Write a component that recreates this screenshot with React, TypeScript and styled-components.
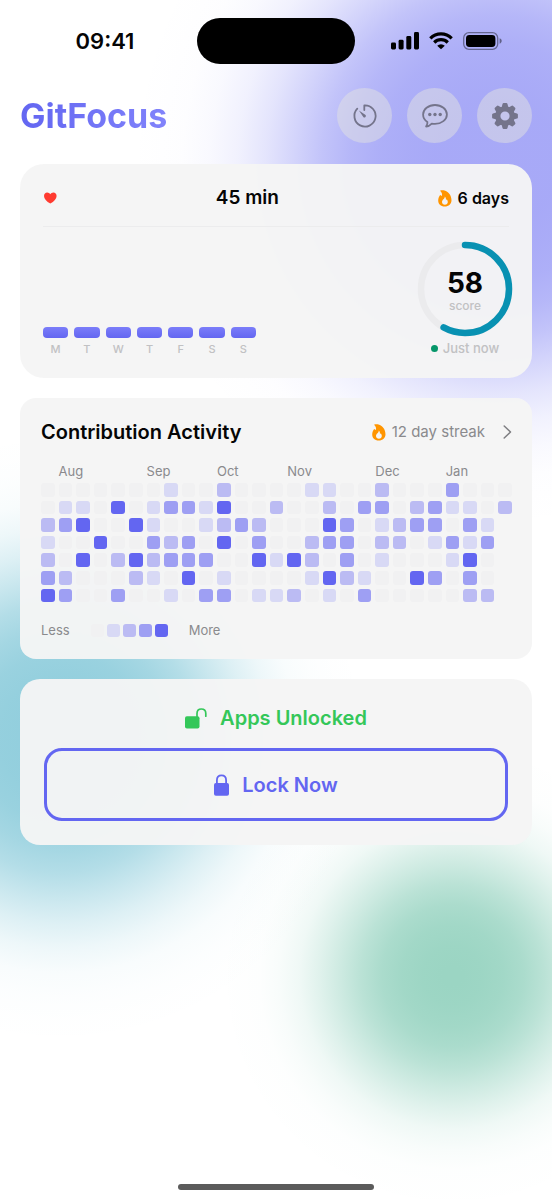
import React from "react";
import styled, { createGlobalStyle } from "styled-components";

const indigo = "#6366f1";
const levels = ["#f1f1f2", "#d8d9f5", "#bbbbf3", "#9e9ff3", indigo];

/* A soft-edged disc: full colour inside `radius`, fading over `soft`. */
const glow = (rgb: string, alpha: number, at: string, radius: number, soft: number) => {
  const curve: [number, number][] = [
    [-2.5, 1], [-2, 0.977], [-1.5, 0.933], [-1, 0.841], [-0.5, 0.691], [0, 0.5],
    [0.5, 0.309], [1, 0.159], [1.5, 0.067], [2, 0.023], [2.5, 0.006], [3, 0],
  ];
  const stops = curve
    .map(([d, a]) => `rgba(${rgb}, ${(a * alpha).toFixed(3)}) ${Math.max(0, Math.round(radius + d * soft))}px`)
    .join(", ");
  return `radial-gradient(circle at ${at}, ${stops})`;
};

const GlobalStyle = createGlobalStyle`
  *, *::before, *::after { box-sizing: border-box; }
  body {
    margin: 0;
    background: #fff;
    color: #050505;
    font-family: Inter, "Liberation Sans", sans-serif;
    -webkit-font-smoothing: antialiased;
  }
  button { font: inherit; color: inherit; cursor: pointer; }
  h1, h2, p { margin: 0; }
`;

const Screen = styled.div`
  display: flex;
  flex-direction: column;
  min-height: 100vh;
  padding: 18px 20px 10px;
  background:
    ${glow("99, 102, 241", 0.56, "90% 162px", 203, 56)},
    ${glow("8, 145, 178", 0.44, "11% 738px", 160, 50)},
    ${glow("5, 150, 105", 0.4, "82% 976px", 112, 41)},
    #fff;
`;

const StatusBar = styled.header`
  display: grid;
  grid-template-columns: 1fr 158px 1fr;
  align-items: center;
  height: 46px;
  margin: 0 -20px;
`;

const Clock = styled.time`
  padding-left: 13px;
  text-align: center;
  font-size: 22px;
  font-weight: 600;
`;

const Island = styled.div`
  height: 46px;
  border-radius: 23px;
  background: #000;
`;

const StatusIcons = styled.div`
  display: flex;
  justify-content: center;
  align-items: center;
  gap: 10px;
  padding-right: 15px;
`;

const TopBar = styled.div`
  display: flex;
  align-items: center;
  justify-content: space-between;
  margin: 24px 0 21px;
`;

const Brand = styled.h1`
  font-size: 34px;
  line-height: 44px;
  font-weight: 700;
  color: transparent;
  background: linear-gradient(90deg, #6366f1, #8183fb);
  background-clip: text;
  -webkit-background-clip: text;
`;

const Actions = styled.nav`
  display: flex;
  gap: 15px;
`;

const RoundButton = styled.button`
  display: grid;
  place-items: center;
  width: 55px;
  height: 55px;
  padding: 0;
  border: 0;
  border-radius: 50%;
  background: rgba(225, 225, 226, 0.5);
  color: #74748b;
`;

const Cards = styled.main`
  display: flex;
  flex-direction: column;
  gap: 20px;
`;

const Card = styled.section<{ $radius: number; $pad: string }>`
  padding: ${(p) => p.$pad};
  border-radius: ${(p) => p.$radius}px;
  background: rgba(245, 245, 245, 0.96);
`;

const SummaryRow = styled.div`
  display: flex;
  justify-content: space-between;
  align-items: center;
  height: 41px;
  padding-bottom: 16px;
  border-bottom: 1px solid #ececed;
`;

const Minutes = styled.p`
  font-size: 19px;
  line-height: 24px;
  font-weight: 600;
`;

const Days = styled.p`
  display: flex;
  align-items: center;
  gap: 6px;
  font-size: 16px;
  line-height: 24px;
  font-weight: 600;
`;

const SummaryBody = styled.div`
  display: flex;
  justify-content: space-between;
  align-items: flex-end;
  padding-top: 18px;
`;

const Week = styled.ol`
  display: grid;
  grid-template-columns: repeat(7, 1fr);
  gap: 6px;
  width: 213px;
  margin: 0;
  padding: 0;
  list-style: none;
`;

const Day = styled.li`
  display: flex;
  flex-direction: column;
  gap: 4px;
  text-align: center;
  font-size: 11px;
  line-height: 14px;
  font-weight: 500;
  color: #c1c1c3;
`;

const Bar = styled.span`
  height: 11px;
  border-radius: 4px;
  background: linear-gradient(#7b7df9, #6366f1);
`;

const ScoreColumn = styled.div`
  display: flex;
  flex-direction: column;
  align-items: center;
  gap: 7px;
`;

const Ring = styled.div`
  display: grid;
  width: 88px;
  height: 88px;
  > * { grid-area: 1 / 1; }
  svg { overflow: visible; }
`;

const Score = styled.div`
  display: flex;
  flex-direction: column;
  align-items: center;
  justify-content: center;
  padding-top: 3px;
  strong { font-size: 28px; line-height: 30px; font-weight: 700; }
  span { font-size: 12px; line-height: 16px; font-weight: 500; color: #c1c1c3; }
`;

const Updated = styled.p`
  display: flex;
  align-items: center;
  gap: 5px;
  font-size: 13px;
  line-height: 16px;
  font-weight: 500;
  color: #c1c1c3;
  &::before {
    content: "";
    width: 7px;
    height: 7px;
    border-radius: 50%;
    background: #059669;
  }
`;

const ActivityHead = styled.div`
  display: flex;
  justify-content: space-between;
  align-items: center;
`;

const ActivityTitle = styled.h2`
  font-size: 20px;
  line-height: 28px;
  font-weight: 600;
`;

const Streak = styled.button`
  display: flex;
  align-items: center;
  gap: 6px;
  padding: 0;
  border: 0;
  background: none;
  font-size: 15px;
  line-height: 20px;
  color: #8a8a8d;
  svg:last-child { margin-left: 12px; }
`;

const Heatmap = styled.div`
  display: grid;
  grid-template-columns: repeat(27, 1fr);
  gap: 4px;
  margin-top: 18px;
`;

const Month = styled.span<{ $col: number }>`
  grid-row: 1;
  grid-column: ${(p) => p.$col} / span 3;
  font-size: 13px;
  line-height: 15px;
  color: #8a8a8d;
`;

const Cell = styled.i<{ $level: number; $row: number; $col: number }>`
  grid-row: ${(p) => p.$row};
  grid-column: ${(p) => p.$col};
  aspect-ratio: 1;
  border-radius: 3px;
  background: ${(p) => levels[p.$level]};
`;

const Legend = styled.div`
  display: flex;
  align-items: center;
  gap: 21px;
  margin-top: 20px;
  font-size: 13px;
  line-height: 17px;
  color: #8a8a8d;
`;

const Swatches = styled.div`
  display: flex;
  gap: 3px;
`;

const Swatch = styled.i<{ $level: number }>`
  width: 13px;
  height: 13px;
  border-radius: 3px;
  background: ${(p) => levels[p.$level]};
`;

const LockState = styled.p`
  display: flex;
  justify-content: center;
  align-items: center;
  gap: 13px;
  font-size: 20px;
  line-height: 28px;
  font-weight: 600;
  color: #34c759;
`;

const LockButton = styled.button`
  display: flex;
  justify-content: center;
  align-items: center;
  gap: 13px;
  width: 100%;
  height: 73px;
  margin-top: 16px;
  padding: 0;
  border: 3px solid ${indigo};
  border-radius: 18px;
  background: none;
  font-size: 20px;
  line-height: 28px;
  font-weight: 600;
  color: ${indigo};
`;

const HomeBar = styled.div`
  width: 196px;
  height: 6px;
  margin: auto auto 0;
  border-radius: 3px;
  background: #5b5b5b;
`;

const Signal = () => (
  <svg width="28" height="18" viewBox="0 0 28 18" aria-hidden="true">
    <rect x="0" y="10.5" width="5" height="7" rx="1.4" />
    <rect x="7.6" y="7.8" width="5" height="9.7" rx="1.4" />
    <rect x="15.3" y="4" width="5" height="13.5" rx="1.4" />
    <rect x="23" y="0" width="5" height="17.5" rx="1.4" />
  </svg>
);

const Wifi = () => (
  <svg width="24" height="18" viewBox="0 0 24 18" aria-hidden="true">
    <g fill="none" stroke="#000" strokeWidth="3.2">
      <path d="M1.3 6.3a15.3 15.3 0 0 1 21.4 0" />
      <path d="M5.2 10.5a9.7 9.7 0 0 1 13.6 0" />
    </g>
    <path d="M12 17.3 8.2 13.7a5.4 5.4 0 0 1 7.6 0Z" />
  </svg>
);

const Battery = () => (
  <svg width="39" height="18" viewBox="0 0 39 18" aria-hidden="true">
    <rect x="0.7" y="0.7" width="34" height="16.6" rx="5.2" fill="none" stroke="#000" strokeOpacity="0.42" strokeWidth="1.3" />
    <rect x="3" y="3" width="29.4" height="12" rx="3.4" />
    <path d="M36.6 6.3c1.3.5 2.1 1.5 2.1 2.7s-.8 2.2-2.1 2.7Z" opacity="0.45" />
  </svg>
);

const TimerIcon = () => (
  <svg width="26" height="26" viewBox="0 0 26 26" fill="none" stroke="currentColor" strokeWidth="1.8" strokeLinecap="round" strokeLinejoin="round" aria-hidden="true">
    <path d="M12.3 7V2.400A10.600 10.600 0 1 1 5.300 5.700" />
    <path d="M6.900 7.500 13.600 12a1.600 1.600 0 0 1-2.100 2.300Z" fill="currentColor" stroke="none" />
  </svg>
);

const BubbleIcon = () => (
  <svg width="28" height="26" viewBox="0 0 28 26" fill="none" stroke="currentColor" strokeWidth="1.8" strokeLinecap="round" strokeLinejoin="round" aria-hidden="true">
    <path d="M14 2C7.400 2 2.100 6.200 2.100 11.500c0 3.200 1.500 5.700 4.300 7.500.3 1.700-.5 3.400-1.300 4.600 2.100-.2 4.200-1.500 5.700-3 1 .2 2.100.3 3.200.3 6.600 0 11.900-4.200 11.900-9.400S20.600 2 14 2Z" />
    <g fill="currentColor" stroke="none">
      <circle cx="8.8" cy="11.5" r="1.7" />
      <circle cx="14" cy="11.5" r="1.7" />
      <circle cx="19.2" cy="11.5" r="1.7" />
    </g>
  </svg>
);

const GearIcon = () => (
  <svg width="26" height="26" viewBox="-13 -13 26 26" fill="currentColor" aria-hidden="true">
    {[0, 45, 90, 135, 180, 225, 270, 315].map((a) => (
      <path
        key={a}
        transform={`rotate(${a})`}
        d="M-3.400-8.500-2.500-12Q-2.200-12.900-1.400-12.900H1.400Q2.200-12.900 2.500-12L3.400-8.500Z"
      />
    ))}
    <circle r="7.2" fill="none" stroke="currentColor" strokeWidth="5.2" />
  </svg>
);

const Heart = () => (
  <svg width="14" height="12" viewBox="0 0 14 12" fill="#ff3b30" aria-hidden="true">
    <path d="M7.300 11.600C3.500 9.200 1 6.700 1 3.900 1 1.900 2.400.4 4.200.4c1.300 0 2.400.7 3.100 1.800C8 1.100 9.100.4 10.400.4c1.800 0 3.200 1.500 3.200 3.500 0 2.800-2.500 5.300-6.300 7.700Z" />
  </svg>
);

const Flame = () => (
  <svg width="14" height="17" viewBox="0 0 14 17" fill="#ff9500" aria-hidden="true">
    <path
      fillRule="evenodd"
      d="M2 .7C3.200.2 4.500.1 5.600.3 10.200 1 13.500 5.300 13.500 10.300c0 3.700-2.700 6.300-6.800 6.300C2.700 16.600.2 14.200.2 10.600c0-2.300.8-4.200 1.900-5.700.7.3 1.200.7 1.700 1.200.8-1.400.1-3.700-1.800-5.400ZM6.800 6.500c.2 2.400-2.800 3.100-2.800 5.500 0 1.600 1.200 2.700 2.900 2.700s2.900-1.100 2.900-2.700c0-1.100-.5-2-1.200-2.700-.1.500-.3.800-.7 1 .3-1.500-.1-2.900-1.100-3.800Z"
    />
  </svg>
);

const Chevron = () => (
  <svg width="9" height="14" viewBox="0 0 9 14" fill="none" stroke="#7e7e82" strokeWidth="1.5" strokeLinecap="round" strokeLinejoin="round" aria-hidden="true">
    <path d="m1.200 1 6.300 6-6.300 6" />
  </svg>
);

const OpenLock = () => (
  <svg width="22" height="21" viewBox="0 0 22 21" aria-hidden="true">
    <rect x="0" y="8.3" width="14.5" height="12.2" rx="1.9" fill="#34c759" />
    <path d="M12 9V5.500C12 2.800 13.700 1 16.300 1s4.500 1.800 4.500 4.500v2.700" fill="none" stroke="#34c759" strokeWidth="1.7" strokeLinecap="round" />
  </svg>
);

const ClosedLock = () => (
  <svg width="15" height="22" viewBox="0 0 15 22" aria-hidden="true">
    <rect x="0" y="9" width="15" height="12.7" rx="1.9" fill={indigo} />
    <path d="M2.900 10V6.200C2.900 3.200 4.800 1.300 7.500 1.300s4.600 1.900 4.600 4.900V10" fill="none" stroke={indigo} strokeWidth="1.8" />
  </svg>
);

const week = ["M", "T", "W", "T", "F", "S", "S"];

const months = [
  { name: "Aug", col: 2 },
  { name: "Sep", col: 7 },
  { name: "Oct", col: 11 },
  { name: "Nov", col: 15 },
  { name: "Dec", col: 20 },
  { name: "Jan", col: 24 },
];

/* One string per weekday, one digit (0-4) per week. */
const contributions = [
  "000000010020000110020003000",
  "011040133140020020330231102",
  "23400410012320004301233031",
  "10040032304030023302201313",
  "20402423330041420301000140",
  "32000210401000014210043030",
  "43003001033011201030000022",
];

const ringLength = 2 * Math.PI * 44;

export default function App() {
  return (
    <Screen>
      <GlobalStyle />
      <StatusBar>
        <Clock>09:41</Clock>
        <Island />
        <StatusIcons>
          <Signal />
          <Wifi />
          <Battery />
        </StatusIcons>
      </StatusBar>

      <TopBar>
        <Brand>GitFocus</Brand>
        <Actions>
          <RoundButton aria-label="Timer"><TimerIcon /></RoundButton>
          <RoundButton aria-label="Messages"><BubbleIcon /></RoundButton>
          <RoundButton aria-label="Settings"><GearIcon /></RoundButton>
        </Actions>
      </TopBar>

      <Cards>
        <Card $radius={24} $pad="22px 23px">
          <SummaryRow>
            <Heart />
            <Minutes>45 min</Minutes>
            <Days><Flame />6 days</Days>
          </SummaryRow>
          <SummaryBody>
            <Week>
              {week.map((d, i) => (
                <Day key={i}><Bar />{d}</Day>
              ))}
            </Week>
            <ScoreColumn>
              <Ring>
                <svg width="88" height="88" viewBox="0 0 88 88" fill="none" strokeWidth="6.5" aria-hidden="true">
                  <circle cx="44" cy="44" r="44" stroke="#ebebed" />
                  <circle
                    cx="44"
                    cy="44"
                    r="44"
                    stroke="#0891b2"
                    strokeLinecap="round"
                    strokeDasharray={`${ringLength * 0.58} ${ringLength}`}
                    transform="rotate(-90 44 44)"
                  />
                </svg>
                <Score><strong>58</strong><span>score</span></Score>
              </Ring>
              <Updated>Just now</Updated>
            </ScoreColumn>
          </SummaryBody>
        </Card>

        <Card $radius={16} $pad="20px 20px 20px 21px">
          <ActivityHead>
            <ActivityTitle>Contribution Activity</ActivityTitle>
            <Streak><Flame />12 day streak<Chevron /></Streak>
          </ActivityHead>
          <Heatmap>
            {months.map((m) => (
              <Month key={m.name} $col={m.col}>{m.name}</Month>
            ))}
            {contributions.map((row, r) =>
              row.split("").map((level, c) => (
                <Cell key={`${r}-${c}`} $level={Number(level)} $row={r + 2} $col={c + 1} />
              ))
            )}
          </Heatmap>
          <Legend>
            <span>Less</span>
            <Swatches>
              {levels.map((_, i) => <Swatch key={i} $level={i} />)}
            </Swatches>
            <span>More</span>
          </Legend>
        </Card>

        <Card $radius={20} $pad="25px 24px 24px">
          <LockState><OpenLock />Apps Unlocked</LockState>
          <LockButton><ClosedLock />Lock Now</LockButton>
        </Card>
      </Cards>

      <HomeBar />
    </Screen>
  );
}
